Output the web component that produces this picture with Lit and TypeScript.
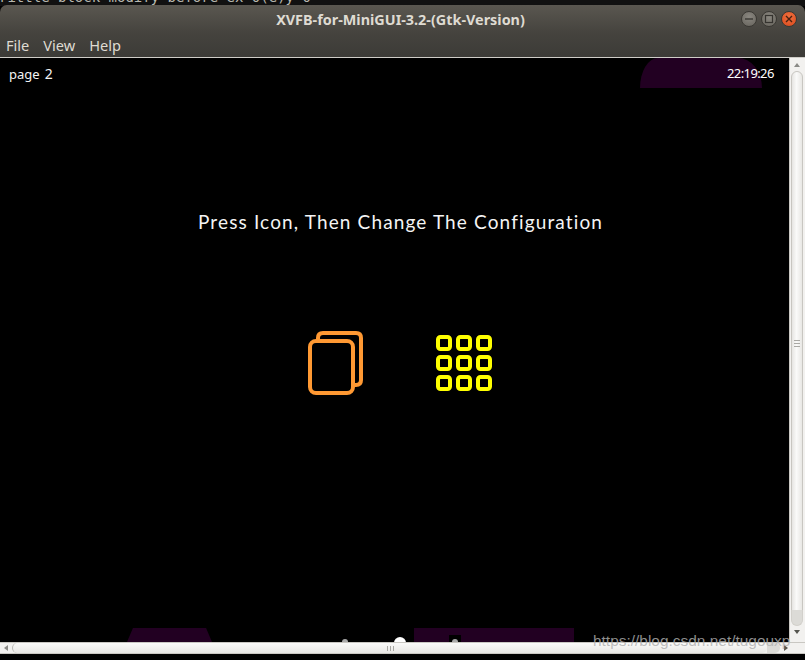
import { LitElement, html, css, svg } from "lit";
import { customElement } from "lit/decorators.js";

@customElement("app-root")
export class AppRoot extends LitElement {
  static styles = css`
    :host { display: block; width: 805px; height: 660px; position: relative; overflow: hidden; background: #000; }
    .window { display: flex; flex-direction: column; width: 805px; height: 660px; }
    .terminal { height: 6px; flex: none; background: #111; overflow: hidden; color: #b9b9b0; font: 14px/14px "DejaVu Sans Mono", monospace; white-space: pre; }
    .terminal span { display: block; margin-top: -10px; margin-left: -1px; }
    .titlebar { flex: none; height: 28px; position: relative; margin-top: -1px; border-radius: 7px 7px 0 0; background: linear-gradient(#5a5750, #45433e); display: flex; align-items: center; justify-content: center; }
    .title { font: bold 14.4px "Noto Sans", sans-serif; color: #dfdbd2; margin-right: 4px; }
    .buttons { position: absolute; right: 8px; top: 6px; display: flex; gap: 4px; }
    .wb { width: 16px; height: 16px; box-sizing: border-box; border-radius: 50%; background: radial-gradient(circle at 50% 35%, #8a8780, #66635c); border: 0.5px solid #3a3833; display: flex; align-items: center; justify-content: center; }
    .wb.close { background: radial-gradient(circle at 50% 35%, #f0703f, #d9491c); }
    .wb svg { display: block; }
    .menu { flex: none; height: 24px; background: linear-gradient(#45433e, #3c3b37); display: flex; align-items: center; gap: 14px; padding: 0 6px; font: 14.6px "Noto Sans", sans-serif; color: #dfdbd2; box-sizing: border-box; }
    .rule { flex: none; height: 1px; background: #cfcdc8; }
    .middle { flex: none; height: 584px; display: flex; }
    .canvas { flex: 1; position: relative; background: #000; overflow: hidden; }
    .vbar { flex: none; width: 16px; background: #f2f1ef; box-sizing: border-box; display: flex; flex-direction: column; align-items: center; padding: 2px 1px 0 0; border-left: 1px solid #c9c7c2; }
    .arrow-up { flex: none; width: 0; height: 0; border: 3.5px solid transparent; border-top: 0; border-bottom: 4px solid #8a8a86; margin: 3px 0 4px; }
    .arrow-down { flex: none; width: 0; height: 0; border: 3.5px solid transparent; border-bottom: 0; border-top: 4px solid #55554f; margin: 4px 0 8px; }
    .vthumb { flex: 1; width: 12px; border: 1px solid #c8c6c1; border-radius: 7px; box-sizing: border-box; background: linear-gradient(90deg, #e6e5e2, #fafaf9 45%, #e8e7e4); display: flex; flex-direction: column; align-items: center; justify-content: center; gap: 2px; }
    .vthumb i { width: 6px; height: 1px; background: #a9a8a4; }
    .vtrail { flex: none; width: 12px; height: 16px; margin-top: -6px; border-radius: 0 0 7px 7px; background: #dcdbd7; border: 1px solid #d2d0cb; border-top: 0; box-sizing: border-box; }
    .hbar { flex: none; height: 12px; background: #f2f1ef; border-top: 1px solid #c9c7c2; border-bottom: 1px solid #c9c7c2; box-sizing: border-box; display: flex; align-items: center; padding: 0 4px; }
    .arrow-left { flex: none; width: 0; height: 0; border: 3.5px solid transparent; border-left: 0; border-right: 4px solid #8a8a86; margin-right: 4px; }
    .arrow-right { flex: none; width: 0; height: 0; border: 3.5px solid transparent; border-right: 0; border-left: 4px solid #55554f; margin-left: 4px; margin-right: 13px; }
    .hthumb { flex: 1; height: 10px; border-radius: 7px; border-left: 1px solid #b9b8b3; box-sizing: border-box; background: linear-gradient(#fafaf9, #e8e7e4); display: flex; align-items: center; justify-content: center; gap: 2px; }
    .hthumb i { width: 1px; height: 5px; background: #a9a8a4; }
    .htrail { flex: none; width: 13px; height: 10px; border-radius: 0 7px 7px 0; background: #dcdbd7; }
    .page { position: absolute; left: 9px; top: 6px; color: #f4f4f4; font: 13px "Noto Sans", sans-serif; }
    .page b { font-weight: 400; font-size: 14px; margin-left: 5px; }
    .clock { position: absolute; left: 727px; top: 6px; color: #fff; font: 13px "Noto Sans", sans-serif; letter-spacing: -0.6px; }
    .headline { position: absolute; left: 198px; top: 152px; color: #f4f4f4; font: 19px "Lato", sans-serif; letter-spacing: 1.14px; white-space: nowrap; }
    .shape { position: absolute; background: #220022; }
    .s1 { left: 640px; top: 0; width: 122px; height: 30px; border-radius: 18px 24px 0 0 / 30px 30px 0 0; }
    .s2 { left: 127px; top: 570px; width: 85px; height: 14px; clip-path: polygon(7% 0, 93% 0, 100% 100%, 0 100%); }
    .s3 { left: 414px; top: 570px; width: 160px; height: 14px; }
    .dot { position: absolute; border-radius: 50%; }
    .d1 { left: 342px; top: 581px; width: 6px; height: 6px; background: #aaa; }
    .d2 { left: 394px; top: 579px; width: 12px; height: 12px; background: #fff; }
    .d3 { left: 449px; top: 577px; width: 12px; height: 7px; background: #000; border-radius: 0; }
    .d4 { left: 452px; top: 581px; width: 6px; height: 6px; background: #aaa; }
    .icons { position: absolute; left: 308px; top: 273px; display: flex; gap: 72px; align-items: center; }
    .icons svg { display: block; }
    .wm { position: absolute; left: 593px; top: 632px; font: 15.45px "Liberation Sans", sans-serif; color: rgba(176,176,176,.82); white-space: nowrap; }
  `;

  render() {
    const cells = [0, 20, 40].flatMap((y) =>
      [0, 20, 40].map(
        (x) => svg`<rect x=${x + 2} y=${y + 2} width="12" height="12" rx="2.5" fill="none" stroke="#ffff00" stroke-width="4"/>`
      )
    );
    return html`
      <div class="window">
        <div class="terminal"><span>rittle block modify before ex 0(e)y 0</span></div>
        <div class="titlebar">
          <div class="title">XVFB-for-MiniGUI-3.2-(Gtk-Version)</div>
          <div class="buttons">
            <div class="wb"><svg width="10" height="10"><path d="M1 5h8" stroke="#35332f" stroke-width="1.3"/></svg></div>
            <div class="wb"><svg width="10" height="10"><rect x="1.5" y="1.5" width="7" height="7" fill="none" stroke="#35332f" stroke-width="1.2"/></svg></div>
            <div class="wb close"><svg width="10" height="10"><path d="M2 2l6 6M8 2l-6 6" stroke="#4a2010" stroke-width="1.4"/></svg></div>
          </div>
        </div>
        <div class="menu"><span>File</span><span>View</span><span>Help</span></div>
        <div class="rule"></div>
        <div class="middle">
          <div class="canvas">
            <div class="shape s1"></div>
            <div class="shape s2"></div>
            <div class="shape s3"></div>
            <div class="dot d1"></div>
            <div class="dot d2"></div>
            <div class="dot d3"></div>
            <div class="dot d4"></div>
            <div class="page">page<b>2</b></div>
            <div class="clock">22:19:26</div>
            <div class="headline">Press Icon, Then Change The Configuration</div>
            <div class="icons">
              <svg width="56" height="64" viewBox="0 0 56 64">
                <path d="M10 8 V7 Q10 2 15 2 H48 Q53 2 53 7 V49 Q53 54 48 54 H47" fill="none" stroke="#ff9933" stroke-width="4"/>
                <rect x="2" y="10" width="43" height="52" rx="6" fill="none" stroke="#ff9933" stroke-width="4"/>
              </svg>
              <svg width="56" height="56" viewBox="0 0 56 56">${cells}</svg>
            </div>
          </div>
          <div class="vbar">
            <div class="arrow-up"></div>
            <div class="vthumb"><i></i><i></i><i></i></div>
            <div class="vtrail"></div>
            <div class="arrow-down"></div>
          </div>
        </div>
        <div class="hbar">
          <div class="arrow-left"></div>
          <div class="hthumb"><i></i><i></i><i></i></div>
          <div class="htrail"></div>
          <div class="arrow-right"></div>
        </div>
      </div>
      <div class="wm">https://blog.csdn.net/tugouxp</div>
    `;
  }
}
